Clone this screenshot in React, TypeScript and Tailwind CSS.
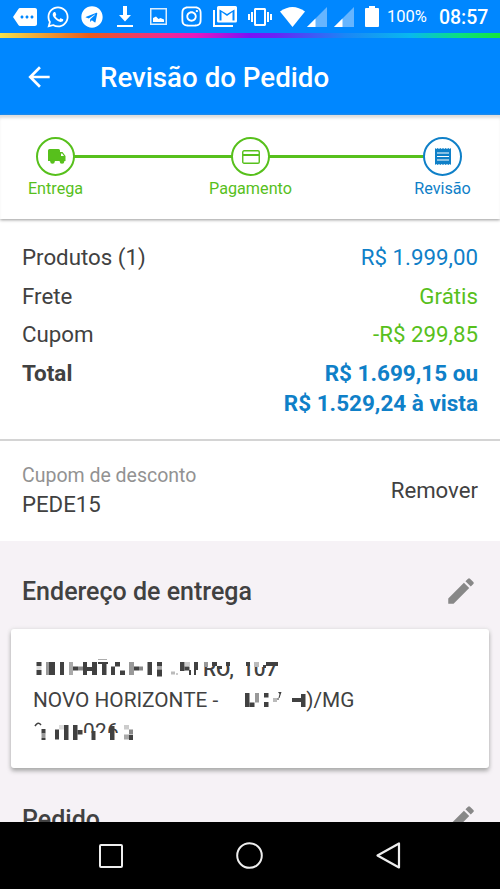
import type { ReactNode } from "react";
import { FaInstagram, FaTelegram, FaWhatsapp } from "react-icons/fa";
import { MdArrowBack, MdEdit, MdMore, MdVibration } from "react-icons/md";

type Block = [x: number, y: number, w: number, h: number, fill?: string];

const streetBlocks: Block[] = [
  [3.5, 3, 5, 4],
  [3.5, 7, 5, 4, "#ddd"],
  [3.5, 11, 5, 5],
  [13, 3, 4, 13, "#999"],
  [16, 3, 6, 13],
  [27, 3, 4, 13],
  [36, 3, 4, 13, "#aaa"],
  [40, 7.5, 5, 4],
  [45, 7.5, 5, 4, "#888"],
  [50, 3, 4, 13],
  [54, 8, 5, 4],
  [59, 3, 5, 13],
  [65, 0, 9, 0.8, "#999"],
  [65, 3, 10, 2],
  [69, 3, 4.5, 13],
  [78, 7.5, 4, 8.5],
  [82, 3, 5, 4.5],
  [87, 11.5, 5, 4.5],
  [96, 3, 5, 13, "#999"],
  [101, 7.5, 5, 4],
  [106, 7.5, 4, 4, "#888"],
  [114.5, 3, 4.5, 13],
  [124, 3, 5, 4.5],
  [124, 7.5, 5, 3, "#aaa"],
  [124, 10.5, 5, 7],
  [138, 12.5, 4, 3, "#bbb"],
  [143, 14, 2, 2, "#ccc"],
  [147, 3, 4.5, 9],
  [151.5, 7.5, 5, 4],
  [152, 3, 5, 4, "#ccc"],
  [156, 11, 2, 5],
  [161, 3, 4, 8],
  [161, 11, 2, 5],
  // over the house number
  [168, 0, 80, 3, "#fff"],
  [171, 3, 4, 5, "#999"],
  [175, 3, 4, 4, "#fff"],
  [179, 3, 5, 4],
  [184, 3, 9, 4, "#fff"],
  [184, 7, 5, 3],
  [193, 3, 4, 4],
  [209, 3, 38, 3, "#fff"],
  [213, 3, 4, 4],
  [221, 3, 5, 5, "#bbb"],
  [226, 3, 4, 5, "#fff"],
  [230, 6, 3, 3],
  [233, 3, 12, 4],
];

const cityBlocks: Block[] = [
  [0, 2, 4.5, 14],
  [4.5, 11.5, 5, 4.5],
  [10, 2, 4, 9.5, "#999"],
  [19, 2, 4.5, 4.5],
  [19, 11, 4.5, 5],
  [28, 7, 4, 4, "#bbb"],
  [32, 7, 2, 2, "#999"],
  [47, 7, 9, 4],
  [56, 3, 4.5, 13],
];

const zipBlocks: Block[] = [
  [48, 10, 40, 8, "#fff"],
  [8.5, 6, 4, 4.5],
  [8.5, 10.5, 4, 4.5, "#999"],
  [8.5, 15, 4, 2],
  [22, 6.5, 4, 10],
  [26, 2, 5, 4.5, "#ddd"],
  [31, 2, 4.5, 15],
  [40, 2, 4.5, 15],
  [44.5, 7, 5, 4.5],
  [58.5, 8, 4, 9],
  [77, 3, 4.5, 14],
  [91, 2, 5, 4.5, "#ccc"],
  [96, 6.5, 4, 5, "#888"],
  [91, 11.5, 5, 5, "#aaa"],
  [96, 12, 4, 5],
];

const Mosaic = ({ blocks }: { blocks: Block[] }) => (
  <>
    {blocks.map(([x, y, w, h, fill], i) => (
      <rect key={i} x={x} y={y} width={w} height={h} fill={fill ?? "#414141"} />
    ))}
  </>
);

const Signal = () => (
  <svg width="20" height="20" viewBox="0 0 20 20">
    <path d="M20 0V20H0Z" fill="#66b5ff" />
    <path d="M8.5 11.5V20H0Z" fill="#fff" />
  </svg>
);

const Truck = () => (
  <svg className="ml-[2px]" width="18" height="15" viewBox="0 0 18 15" fill="currentColor">
    <path
      fillRule="evenodd"
      d="M1.500 0H10.500Q12 0 12 1.500V3H14.500L17.500 7V12H0V1.500Q0 0 1.500 0zM13 4.500V7H16L14.200 4.500z"
    />
    <circle cx="4.500" cy="12.500" r="2.300" />
    <circle cx="14" cy="12.500" r="2.300" />
  </svg>
);

const Card = () => (
  <svg width="18" height="14" viewBox="0 0 18 14" fill="none" stroke="currentColor">
    <rect x=".75" y=".75" width="16.500" height="12.500" rx="1.300" strokeWidth="1.400" />
    <path d="M1 5h16" strokeWidth="2" />
  </svg>
);

const Receipt = () => (
  <svg width="16" height="17" viewBox="0 0 16 17">
    <path
      d="M0 0l1.300 1L2.700 0 4 1l1.300-1 1.400 1L8 0l1.300 1 1.400-1L12 1l1.300-1 1.400 1L16 0v17l-1.300-1-1.400 1-1.300-1-1.300 1-1.400-1L8 17l-1.300-1-1.400 1L4 16l-1.300 1-1.400-1L0 17z"
      fill="currentColor"
    />
    <path d="M2 5h12M2 8.500h12M2 12h12" stroke="#fff" strokeWidth="1.200" />
  </svg>
);

const StatusBar = () => (
  <div className="flex h-[33px] items-center bg-[#0087ff] pl-[13px] text-white">
    <MdMore className="h-6 w-6 shrink-0" />
    <FaWhatsapp className="ml-[9px] h-6 w-6 shrink-0" />
    <FaTelegram className="ml-[11px] h-[22px] w-[22px] shrink-0" />
    <svg className="ml-[14px] shrink-0" width="16" height="22" viewBox="0 0 16 22" fill="currentColor">
      <path d="M6 0h4v9h4l-6 6.500L2 9h4zM0 19h16v2H0z" />
    </svg>
    <svg className="ml-[17px] shrink-0" width="17" height="17" viewBox="0 0 17 17">
      <path d="M.75.75h15.500v15.500H.75z" fill="none" stroke="#d9edff" strokeWidth="1.500" />
      <path d="M3 14v-4l3-1.500 2.500 2.500 2-1 3.500 1.500V14z" fill="#fff" />
    </svg>
    <FaInstagram className="ml-[13px] h-[23px] w-[23px] shrink-0" />
    <svg className="ml-[10px] shrink-0" width="24" height="22" viewBox="0 0 24 22">
      <path d="M1 4v16h19" fill="none" stroke="#fff" strokeWidth="2" />
      <path
        fill="#fff"
        fillRule="evenodd"
        d="M5.500 0h17Q24 0 24 1.500v13.500Q24 16.500 22.500 16.500h-17Q4 16.500 4 15V1.500Q4 0 5.500 0zM6.500 3.500v11h2V6l5.500 4 5.500-4v8.500h2v-11L14 8z"
      />
    </svg>
    <MdVibration className="ml-[11px] h-6 w-6 shrink-0" />
    <svg className="ml-[8px] shrink-0" width="25" height="20" viewBox="0 0 25 20">
      <path d="M0 4.500Q12.500-4.500 25 4.500L12.500 20z" fill="#fff" />
    </svg>
    <div className="ml-[2px] flex gap-[7px]">
      <Signal />
      <Signal />
    </div>
    <svg className="ml-[11px] shrink-0" width="14" height="21" viewBox="0 0 14 21" fill="currentColor">
      <path d="M4 0h6v2h3q1 0 1 1v17q0 1-1 1H1q-1 0-1-1V3q0-1 1-1h3z" />
    </svg>
    <span className="ml-[8px] mt-px text-[16.5px] leading-none">100%</span>
    <span className="ml-[12px] mt-[2px] text-[19.5px] font-medium leading-none">08:57</span>
  </div>
);

interface StepProps {
  label: string;
  icon: ReactNode;
  className: string;
}

const Step = ({ label, icon, className }: StepProps) => (
  <div className={`flex w-[39px] shrink-0 flex-col items-center ${className}`}>
    <div className="flex h-[39px] w-[39px] items-center justify-center rounded-full border-2 border-current">
      {icon}
    </div>
    <span className="mt-[3px] whitespace-nowrap text-[16.2px] leading-5">{label}</span>
  </div>
);

const StepLine = () => <div className="-mx-px mt-[18px] h-[3px] bg-[#57c01c]" />;

const SummaryRow = ({ label, children, className }: { label: string; children: ReactNode; className: string }) => (
  <div className="flex justify-between leading-[30px]">
    <span>{label}</span>
    <span className={`text-right ${className}`}>{children}</span>
  </div>
);

const NavBar = () => (
  <nav className="flex h-[67px] items-center justify-between bg-black pl-[99px] pr-[99px]">
    <svg width="24" height="24" viewBox="0 0 24 24" fill="none" stroke="#eee" strokeWidth="2">
      <rect x="1" y="1" width="22" height="22" rx="1" />
    </svg>
    <svg width="27" height="27" viewBox="0 0 27 27" fill="none" stroke="#eee" strokeWidth="2">
      <circle cx="13.500" cy="13.500" r="12.300" />
    </svg>
    <svg width="25" height="27" viewBox="0 0 25 27" fill="none" stroke="#eee" strokeWidth="2.200" strokeLinejoin="round">
      <path d="M23 1.500v24L1.500 13.500z" />
    </svg>
  </nav>
);

const App = () => {
  return (
    <div className="flex h-[889px] w-[500px] flex-col overflow-hidden bg-white font-[Roboto,sans-serif] text-[#414141]">
      <StatusBar />
      <div className="h-[5px] shrink-0 bg-[linear-gradient(90deg,#f5e14b_0%,#e85a1c_18%,#f02b91_33%,#e818c0_39%,#7a12f5_50%,#6a22f5_55%,#1c86f5_69%,#08b8ee_82%,#0ce07e_92%,#14e63c_100%)]" />
      <header className="flex h-[77px] shrink-0 items-center bg-[#0087ff] pl-[23px] text-white">
        <MdArrowBack className="h-8 w-8" />
        <h1 className="ml-[45px] mt-[2px] text-[27.7px] font-medium leading-none">Revisão do Pedido</h1>
      </header>

      <section className="h-[104px] shrink-0 bg-white pt-[22px] shadow-[inset_0_4px_3px_-1px_#ddd,0_1px_3px_#999]">
        <div className="grid grid-cols-[39px_156px_39px_153px_39px] pl-[36px]">
          <Step label="Entrega" className="text-[#57c01c]" icon={<Truck />} />
          <StepLine />
          <Step label="Pagamento" className="text-[#57c01c]" icon={<Card />} />
          <StepLine />
          <Step label="Revisão" className="text-[#0f80c8]" icon={<Receipt />} />
        </div>
      </section>

      <section className="flex h-[222px] shrink-0 flex-col gap-[8.5px] border-b-2 border-[#d4d4d4] px-[22px] pt-[23px] text-[22.3px]">
        <SummaryRow label="Produtos (1)" className="text-[#0f80c8]">R$ 1.999,00</SummaryRow>
        <SummaryRow label="Frete" className="text-[#57c01c]">Grátis</SummaryRow>
        <SummaryRow label="Cupom" className="text-[#57c01c]">-R$ 299,85</SummaryRow>
        <div className="text-[22.500px] font-bold">
          <SummaryRow label="Total" className="text-[#0f80c8]">
            R$ 1.699,15 ou
            <br />
            R$ 1.529,24 à vista
          </SummaryRow>
        </div>
      </section>

      <section className="flex h-[100px] shrink-0 items-center justify-between px-[22px] text-[22.2px]">
        <div className="-mt-[2px]">
          <p className="text-[19.5px] leading-[28px] text-[#929292]">Cupom de desconto</p>
          <p className="leading-[28px]">PEDE15</p>
        </div>
        <button className="-mt-px">Remover</button>
      </section>

      <main className="min-h-0 flex-1 overflow-hidden bg-[#f6f2f6]">
        <div className="flex h-[88px] items-center justify-between pl-[22px] pr-[22px] pt-3">
          <h2 className="mt-[2px] text-[25px] font-medium">Endereço de entrega</h2>
          <MdEdit className="h-[34px] w-[34px] text-[#888]" />
        </div>
        <div className="mx-[11px] h-[139px] rounded-[3px] bg-white pl-[22px] pt-[30px] text-[20.8px] leading-[32px] shadow-[0_3px_4px_#aaa,0_0_4px_#ddd]">
          <svg className="block overflow-visible" width="260" height="22" viewBox="0 0 260 22" fill="#414141">
            <text x="170" y="16.500" fontSize="20.800" fontWeight="500">RO,</text>
            <text x="209" y="16.500" fontSize="20.800" fontWeight="500">107</text>
            <Mosaic blocks={streetBlocks} />
          </svg>
          <div className="flex h-[30px] items-center pt-[7px]">
            <span className="whitespace-nowrap">NOVO HORIZONTE -</span>
            <svg className="ml-[27px]" width="61" height="18" viewBox="0 0 61 18" fill="#414141">
              <Mosaic blocks={cityBlocks} />
              <path d="M33 1h3.500l-2 6h-1l1-4z" />
            </svg>
            <span>)/MG</span>
          </div>
          <svg className="mt-3 block overflow-visible" width="110" height="20" viewBox="0 0 110 20" fill="#414141">
            <g fontSize="20.800">
              <text x="50" y="15">0</text>
              <text x="62" y="15">2</text>
              <text x="74" y="15">6</text>
            </g>
            <path d="M2 3Q5-2 8 2" fill="none" stroke="#414141" strokeWidth="1.500" />
            <Mosaic blocks={zipBlocks} />
          </svg>
        </div>
        <div className="flex items-center justify-between pl-[22px] pr-[22px] pt-8">
          <h2 className="mt-px text-[25px] font-medium">Pedido</h2>
          <MdEdit className="h-[34px] w-[34px] text-[#888]" />
        </div>
      </main>
      <NavBar />
    </div>
  );
};

export default App;
